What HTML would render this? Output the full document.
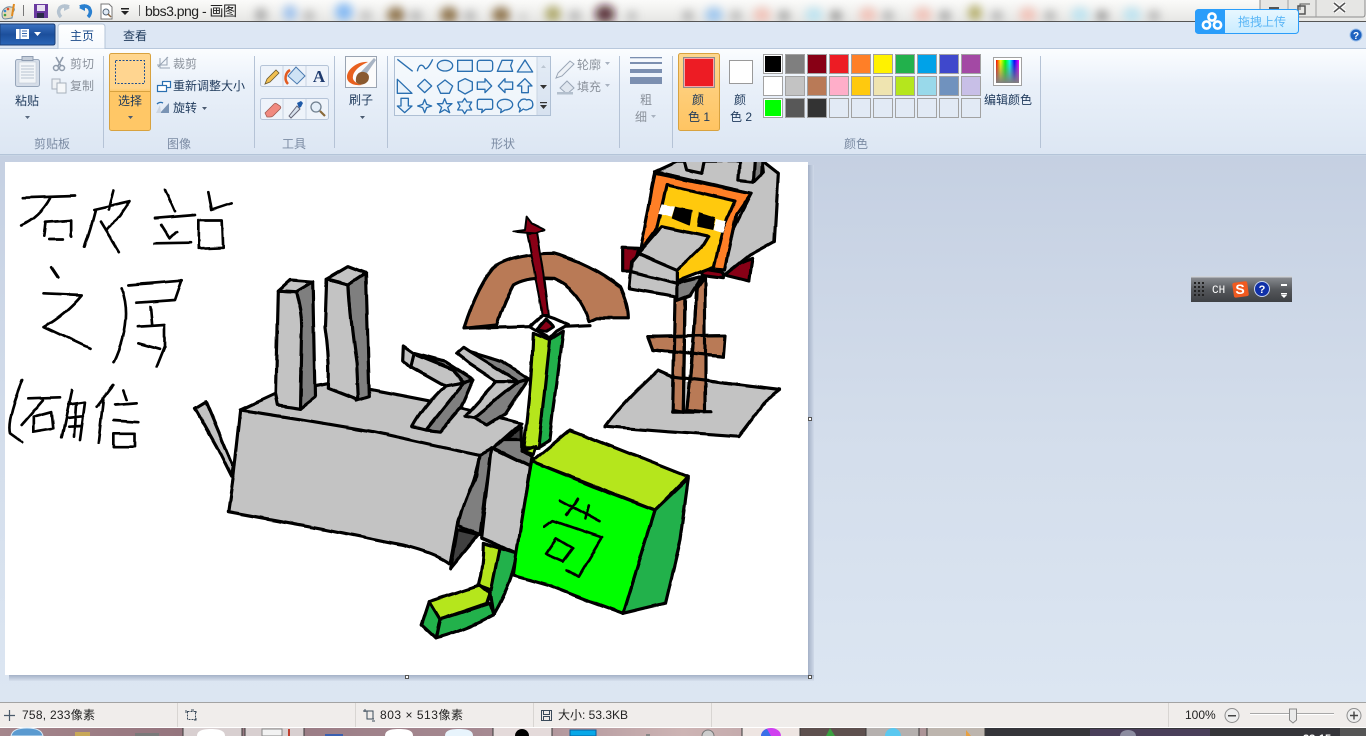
<!DOCTYPE html>
<html lang="zh"><head><meta charset="utf-8"><title>bbs3.png - 画图</title>
<style>
html,body{margin:0;padding:0;width:1366px;height:736px;overflow:hidden;background:#dce6f2}
svg{display:block;position:absolute;left:0;top:0}
text{font-family:"Liberation Sans","Noto Sans CJK SC",sans-serif;font-size:12px;fill:#1e395b}
.g{fill:#7b8ba3}.m{fill:#8b929c}
.d{stroke:#000;stroke-width:9.500;stroke-linejoin:round;stroke-linecap:round}
.w{fill:none;stroke:#000;stroke-width:8;stroke-linejoin:round;stroke-linecap:round}
.sh{fill:#e9f2fa;stroke:#2a6fb0;stroke-width:4;stroke-linejoin:round}
.c3{fill:#c3c3c3}.c7{fill:#7f7f7f}.lm{fill:#b5e61d}.gr{fill:#22b14c}.br{fill:#b97a57}.rd{fill:#880015}
.st{fill:#222;font-size:12px}
</style></head><body>
<svg width="1366" height="736" viewBox="0 0 1366 736" xmlns="http://www.w3.org/2000/svg">
<defs>
<filter id="b" x="-50%" y="-50%" width="200%" height="200%"><feGaussianBlur stdDeviation="4.500"/></filter>
<filter id="wob" x="0" y="0" width="1" height="1"><feTurbulence type="fractalNoise" baseFrequency=".035" numOctaves="2" seed="4" result="n"/><feDisplacementMap in="SourceGraphic" in2="n" scale="3.500" xChannelSelector="R" yChannelSelector="G"/></filter>
<linearGradient id="tt" x1="0" y1="0" x2="0" y2="1"><stop offset="0" stop-color="#fbfbfa"/><stop offset="1" stop-color="#e6e6e4"/></linearGradient>
<linearGradient id="rb" x1="0" y1="0" x2="0" y2="1"><stop offset="0" stop-color="#fbfdff"/><stop offset=".35" stop-color="#e9f0f9"/><stop offset="1" stop-color="#dce6f3"/></linearGradient>
<linearGradient id="ws" x1="0" y1="0" x2="0" y2="1"><stop offset="0" stop-color="#c5d0e2"/><stop offset=".5" stop-color="#d3ddeb"/><stop offset="1" stop-color="#dce6f2"/></linearGradient>
<linearGradient id="ab" x1="0" y1="0" x2="0" y2="1"><stop offset="0" stop-color="#3a72c0"/><stop offset=".5" stop-color="#1c4f9c"/><stop offset="1" stop-color="#2a66b8"/></linearGradient>
<linearGradient id="tb" x1="0" y1="0" x2="0" y2="1"><stop offset="0" stop-color="#fff"/><stop offset="1" stop-color="#f5f9fe"/></linearGradient>
<linearGradient id="se" x1="0" y1="0" x2="0" y2="1"><stop offset="0" stop-color="#ffd68f"/><stop offset=".45" stop-color="#ffd48a"/><stop offset=".5" stop-color="#ffc766"/><stop offset="1" stop-color="#ffc766"/></linearGradient>
<linearGradient id="sc" x1="0" y1="0" x2="0" y2="1"><stop offset="0" stop-color="#fdd78f"/><stop offset="1" stop-color="#ffc462"/></linearGradient>
<linearGradient id="gl" x1="0" y1="0" x2="0" y2="1"><stop offset="0" stop-color="#f5f9fd"/><stop offset="1" stop-color="#eef4fa"/></linearGradient>
<linearGradient id="sb" x1="0" y1="0" x2="0" y2="1"><stop offset="0" stop-color="#e4ecf6"/><stop offset="1" stop-color="#d7e2f0"/></linearGradient>
<linearGradient id="ime" x1="0" y1="0" x2="0" y2="1"><stop offset="0" stop-color="#8a8d92"/><stop offset=".5" stop-color="#55585c"/><stop offset="1" stop-color="#3e4044"/></linearGradient>
<linearGradient id="rbw" x1="0" y1="0" x2="1" y2="0"><stop offset="0" stop-color="#f00"/><stop offset=".2" stop-color="#ff0"/><stop offset=".4" stop-color="#0f0"/><stop offset=".6" stop-color="#0ff"/><stop offset=".8" stop-color="#00f"/><stop offset="1" stop-color="#f0f"/></linearGradient>
<linearGradient id="rbg" x1="0" y1="0" x2="0" y2="1"><stop offset="0" stop-color="#808080" stop-opacity="0"/><stop offset="1" stop-color="#808080"/></linearGradient>
<linearGradient id="bd" x1="0" y1="0" x2="0" y2="1"><stop offset="0" stop-color="#e8f7ff"/><stop offset="1" stop-color="#c9ecff"/></linearGradient>
<linearGradient id="tk" x1="0" y1="0" x2="1" y2="0"><stop offset="0" stop-color="#a5868c"/><stop offset=".13" stop-color="#95757e"/><stop offset=".36" stop-color="#a68a92"/><stop offset=".5" stop-color="#cdb4b4"/><stop offset=".58" stop-color="#bfa5a8"/><stop offset="1" stop-color="#6a5a5c"/></linearGradient>
<linearGradient id="shr" x1="0" y1="0" x2="1" y2="0"><stop offset="0" stop-color="#a4b1c7"/><stop offset="1" stop-color="#cfd9e8"/></linearGradient>
<linearGradient id="shb" x1="0" y1="0" x2="0" y2="1"><stop offset="0" stop-color="#a4b1c7"/><stop offset="1" stop-color="#d6e0ed"/></linearGradient>
<clipPath id="cv"><rect x="5" y="162" width="803" height="513"/></clipPath>
</defs>

<!-- title strip -->
<rect width="1366" height="22" fill="url(#tt)"/>
<g filter="url(#b)" opacity=".8" transform="translate(0 1)">
<ellipse cx="261" cy="14" rx="6" ry="7" fill="#9a9a9a"/><ellipse cx="290" cy="12" rx="7" ry="8" fill="#8cb8ee"/><ellipse cx="309" cy="15" rx="6" ry="6" fill="#b0b0b0"/>
<ellipse cx="344" cy="11" rx="9" ry="9" fill="#6eaef5"/><ellipse cx="366" cy="15" rx="6" ry="6" fill="#b8b8b8"/>
<ellipse cx="396" cy="14" rx="9" ry="8" fill="#7a5a2a"/><ellipse cx="416" cy="15" rx="6" ry="6" fill="#aaa"/>
<ellipse cx="449" cy="14" rx="9" ry="8" fill="#7a5a2a"/><ellipse cx="470" cy="15" rx="6" ry="6" fill="#aaa"/>
<ellipse cx="501" cy="14" rx="9" ry="8" fill="#7a5a2a"/><ellipse cx="523" cy="16" rx="4" ry="4" fill="#bbb"/>
<ellipse cx="553" cy="13" rx="8" ry="8" fill="#a09a50"/><ellipse cx="575" cy="15" rx="6" ry="6" fill="#aaa"/>
<ellipse cx="605" cy="13" rx="10" ry="9" fill="#3c1014"/><ellipse cx="632" cy="15" rx="5" ry="5" fill="#aaa"/>
<ellipse cx="688" cy="15" rx="6" ry="6" fill="#aaa"/>
<ellipse cx="714" cy="14" rx="9" ry="8" fill="#8fc0f0"/><ellipse cx="736" cy="15" rx="6" ry="6" fill="#b0b0b0"/>
<ellipse cx="762" cy="14" rx="9" ry="8" fill="#f2bcb0"/><ellipse cx="784" cy="15" rx="6" ry="6" fill="#999"/>
<ellipse cx="814" cy="14" rx="9" ry="8" fill="#b5e2f2"/><ellipse cx="836" cy="15" rx="6" ry="6" fill="#888"/>
<ellipse cx="868" cy="14" rx="9" ry="8" fill="#f2bcb0"/><ellipse cx="888" cy="15" rx="6" ry="6" fill="#aaa"/>
<ellipse cx="923" cy="14" rx="9" ry="8" fill="#f2bcb0"/><ellipse cx="945" cy="15" rx="6" ry="6" fill="#999"/>
<ellipse cx="975" cy="12" rx="7" ry="8" fill="#a8a050"/><ellipse cx="997" cy="15" rx="6" ry="6" fill="#aaa"/>
<ellipse cx="1028" cy="14" rx="9" ry="8" fill="#f2bcb0"/><ellipse cx="1050" cy="15" rx="6" ry="6" fill="#aaa"/>
<ellipse cx="1080" cy="14" rx="9" ry="8" fill="#b5e2f2"/><ellipse cx="1102" cy="15" rx="6" ry="6" fill="#888"/>
<ellipse cx="1132" cy="14" rx="9" ry="8" fill="#b5e2f2"/><ellipse cx="1154" cy="15" rx="6" ry="6" fill="#aaa"/>
</g>
<!-- QAT -->
<g>
<path d="M2 14c0-5 5-8 9-7 4 0 4 3 2 5l-1 6-7 1c-2 0-3-2-3-5z" fill="#e8d9b8" stroke="#6a8aa0"/>
<circle cx="5" cy="11" r="1.300" fill="#3a8ad0"/><circle cx="8" cy="9" r="1.300" fill="#e05030"/><circle cx="5" cy="15" r="1.300" fill="#40a040"/>
<path d="M14 4l-2 12" stroke="#e08a20" stroke-width="2"/>
<rect x="23" y="5" width="1" height="11" fill="#777"/>
<rect x="34" y="4" width="14" height="14" fill="#6a3aa0"/><rect x="37" y="5" width="8" height="6" fill="#e8e0f2"/><rect x="37" y="13" width="7" height="5" fill="#2a2a48"/>
<path d="M69 7c-4-2-9-1-10 3-1 2 0 5 2 7" fill="none" stroke="#b5c3d0" stroke-width="3.500"/><path d="M64 4l6 4-6 3z" fill="#b5c3d0"/>
<path d="M80 7c4-2 9-1 10 3 1 2 0 5-2 7" fill="none" stroke="#2a80d0" stroke-width="3.500"/><path d="M85 4l-6 4 6 3z" fill="#2a80d0"/>
<path d="M101 4h8l3 3v12h-11z" fill="#fff" stroke="#777"/><circle cx="106" cy="12" r="3" fill="#dfeaf6" stroke="#567"/><path d="M108 14l3 3" stroke="#864" stroke-width="1.500"/>
<rect x="121" y="8" width="8" height="1.500" fill="#222"/><path d="M121 11h8l-4 4z" fill="#222"/>
<rect x="139" y="5" width="1" height="11" fill="#777"/>
<text x="145" y="16" textLength="92" style="font-size:14px;fill:#222">bbs3.png - 画图</text>
</g>
<!-- window buttons -->
<path d="M1260 0v17h103c1 0 2-1 2-3V0" fill="#e6e6e4" stroke="#8c8c8c"/>
<path d="M1288 0v17M1316 0v17" stroke="#a0a0a0"/>
<rect x="1269" y="7" width="10" height="3" fill="#555"/>
<rect x="1298" y="6" width="7" height="8" fill="none" stroke="#555" stroke-width="1.500"/><path d="M1296 9V3h10" fill="none" stroke="#555" transform="translate(4 1)"/>
<path d="M1334 3l11 9M1345 3l-11 9" stroke="#fff" stroke-width="4"/><path d="M1334 3l11 9M1345 3l-11 9" stroke="#555" stroke-width="1.600"/>

<!-- tab band -->
<rect y="21" width="1366" height="1.500" fill="#555"/>
<rect y="22" width="1366" height="27" fill="#dde7f4"/>
<rect y="48" width="1366" height="1" fill="#b8c8dc"/>
<path d="M0 24h53c1.500 0 2 .5 2 2v17c0 1.500-.5 2-2 2H0z" fill="url(#ab)" stroke="#1a3f78"/>
<rect x="16" y="29" width="13" height="10" fill="#fff"/><path d="M20 29v10M22 31h5M22 33.500h5M22 36h5" stroke="#3a6ab0"/><path d="M34 32h7l-3.500 4z" fill="#fff"/>
<path d="M58 49V27c0-2 1-3 3-3h41c2 0 3 1 3 3v22z" fill="url(#tb)" stroke="#b5c5d8"/>
<text x="82" y="40" text-anchor="middle" style="fill:#1a4a8a">主页</text>
<text x="135" y="40" text-anchor="middle">查看</text>
<circle cx="1356" cy="35" r="6" fill="#1e62c0" stroke="#9cc0ea"/><text x="1356" y="39" text-anchor="middle" style="font-size:10px;fill:#fff;font-weight:bold">?</text>

<!-- ribbon -->
<rect y="49" width="1366" height="106" fill="url(#rb)"/>
<rect y="154" width="1366" height="1.500" fill="#b4c4d8"/>
<g fill="#b5c3d6">
<rect x="103" y="56" width="1" height="92"/><rect x="254" y="56" width="1" height="92"/><rect x="334" y="56" width="1" height="92"/><rect x="387" y="56" width="1" height="92"/><rect x="619" y="56" width="1" height="92"/><rect x="672" y="56" width="1" height="92"/><rect x="1040" y="56" width="1" height="92"/>
</g>
<text x="52" y="148" text-anchor="middle" class="g">剪贴板</text><text x="179" y="148" text-anchor="middle" class="g">图像</text><text x="294" y="148" text-anchor="middle" class="g">工具</text><text x="503" y="148" text-anchor="middle" class="g">形状</text><text x="856" y="148" text-anchor="middle" class="g">颜色</text>

<!-- clipboard -->
<rect x="15.500" y="59.500" width="24" height="27" rx="2" fill="#d5dde8" stroke="#97a6ba"/><rect x="19" y="62" width="17" height="21" fill="#f2f5f8" stroke="#c0c8d4" stroke-width=".6"/><path d="M21 66h13M21 69h13M21 72h13M21 75h13M21 78h13" stroke="#b8c2d0"/><rect x="22" y="56.500" width="11" height="4" fill="#c4cdd9" stroke="#8f9db1"/>
<text x="27" y="105" text-anchor="middle">粘贴</text><path d="M25 116h5l-2.500 3z" fill="#5a6a80"/>
<path d="M56 57l5 9M63 57l-5 9" stroke="#8f9bab" stroke-width="1.600"/><circle cx="56" cy="68" r="2.500" fill="none" stroke="#8f9bab" stroke-width="1.500"/><circle cx="62" cy="68" r="2.500" fill="none" stroke="#8f9bab" stroke-width="1.500"/>
<text x="70" y="68" class="m">剪切</text>
<rect x="52" y="79" width="8" height="10" fill="#eef1f4" stroke="#a7b0bc"/><rect x="57" y="83" width="9" height="10" fill="#f5f7f9" stroke="#a7b0bc"/>
<text x="70" y="90" class="m">复制</text>

<!-- select -->
<rect x="109.500" y="53.500" width="41" height="77" rx="2" fill="url(#se)" stroke="#d8a23f"/><rect x="110" y="91" width="40" height="1" fill="#d8a23f"/>
<rect x="115.500" y="60.500" width="29" height="23" fill="#ffd590" stroke="#1d4f90" stroke-dasharray="2 1.500"/>
<text x="130" y="105" text-anchor="middle">选择</text><path d="M128 116h5l-2.500 3z" fill="#4a5a70"/>
<path d="M160 58v10h10M157 65h10V57M158 67l10-10" fill="none" stroke="#98a4b4"/><text x="173" y="68" class="m">裁剪</text>
<rect x="162.500" y="81.500" width="8" height="6" fill="#fff" stroke="#2a6fb0" stroke-width="1.200"/><rect x="157.500" y="85.500" width="9" height="6" fill="#fff" stroke="#2a6fb0" stroke-width="1.200"/>
<text x="173" y="90">重新调整大小</text>
<path d="M160 113l9-10v10z" fill="#7a94b4"/><path d="M156 113l4-8 1 8z" fill="#cdd6e2"/><path d="M157 104c2-2 4-2 6-1" fill="none" stroke="#2a6fb0" stroke-width="1.300"/>
<text x="173" y="112">旋转</text><path d="M202 107h5l-2.500 3z" fill="#4a5a70"/>

<!-- tools -->
<rect x="260.500" y="65.500" width="68" height="21" rx="2" fill="#eef3fa" stroke="#b5c4d8"/><rect x="260.500" y="98.500" width="68" height="21" rx="2" fill="#eef3fa" stroke="#b5c4d8"/>
<path d="M283 66v20M306 66v20M283 99v20M306 99v20" stroke="#c8d3e2"/>
<path d="M265 84l2-5 9-9 3 3-9 9z" fill="#f2c050" stroke="#6a5a30" stroke-width=".8"/>
<path d="M296 67l9 9-8 8-9-8z" fill="#cfe3f5" stroke="#4a7ab0"/><path d="M290 70c-5 3-6 10-2 14" stroke="#e25a20" stroke-width="2.500" fill="none"/>
<text x="319" y="82" text-anchor="middle" style="font-family:'Liberation Serif',serif;font-size:17px;font-weight:bold;fill:#1e3a6e">A</text>
<path d="M265 113l9-9c1-1 2-1 3 0l3 2c1 1 1 2 0 3l-7 7c-1 1-2 1-3 1h-3z" fill="#f08a80" stroke="#a05a50" stroke-width=".8"/>
<path d="M289 116l8-10 3 3-9 9z" fill="#d8e2ee" stroke="#667"/><path d="M297 103l4-2 2 2-2 4-2 1z" fill="#1e5aa8"/>
<circle cx="316" cy="107" r="5" fill="#e4eef8" stroke="#708090" stroke-width="1.300"/><path d="M320 111l5 5" stroke="#8a6a3a" stroke-width="2.200"/>

<!-- brush -->
<rect x="345.500" y="56.500" width="31" height="31" fill="#fbfbfb" stroke="#9aa4b2"/>
<path d="M368 62c-10-1-21 7-21 15 0 6 7 9 15 8-7-2-10-5-9-9 1-6 8-11 15-14z" fill="#e8601e"/>
<path d="M360 73l14-15 2 2-11 16z" fill="#a8b4c4"/>
<path d="M356 82c-1-7 3-11 8-10 5 1 6 5 4 9-3 4-9 5-12 1z" fill="#8a5a30"/>
<text x="361" y="104" text-anchor="middle">刷子</text><path d="M360 116h5l-2.500 3z" fill="#4a5a70"/>

<!-- shapes gallery -->
<rect x="394.500" y="56.500" width="156" height="59" fill="url(#gl)" stroke="#aebfd4"/>
<rect x="537" y="57" width="13" height="58" fill="url(#sb)"/><path d="M537 57v58" stroke="#c8d4e2"/>
<path d="M541 68h5l-2.500-3z" fill="#bcc6d2"/><path d="M540 85h7l-3.500 4z" fill="#333"/><path d="M540 105h7l-3.500 4z" fill="#333"/><rect x="540" y="102" width="7" height="1.200" fill="#333"/>
<g transform="translate(380 0) scale(.3333)" class="sh">
<path d="M52 178L98 214" fill="none"/><path d="M112 214C118 186 130 196 134 204S150 196 158 178" fill="none"/>
<ellipse cx="195" cy="197" rx="23" ry="16"/><rect x="233" y="181" width="44" height="33"/><rect x="292" y="181" width="46" height="33" rx="8"/>
<path d="M352 214L366 181H398L392 197L398 214Z"/><path d="M435 180L458 216H412Z"/>
<path d="M52 238L96 280H52Z"/><path d="M134 238L155 258L134 278L113 258Z"/><path d="M195 240L218 258L208 280H182L172 258Z"/><path d="M255 236L277 246V270L255 282L235 270V246Z"/>
<path d="M292 246H315V236L335 258L315 278V268H292Z"/><path d="M398 246H375V236L355 258L375 278V268H398Z"/><path d="M435 236L456 258H445V278H425V258H412Z"/>
<path d="M63 295H85V318H96L74 338L52 318H63Z"/><path d="M134 298L140 313L155 318L140 323L134 338L128 323L113 318L128 313Z"/>
<path d="M194 296L200 311H216L203 322L209 338L194 329L179 338L185 322L172 311H188Z"/>
<path d="M254 295L261 306H275L268 318L275 330H261L254 341L247 330H233L240 318L233 306H247Z"/>
<path d="M298 298H332Q338 298 338 304V322Q338 328 332 328H316L305 338L307 328H298Q292 328 292 322V304Q292 298 298 298Z"/>
<path d="M375 298C390 298 398 306 398 314S388 330 375 330L362 338L364 328C356 325 352 320 352 314C352 306 360 298 375 298Z"/>
<path d="M420 304C424 296 436 296 440 300C448 296 458 302 458 310C460 318 456 326 448 326C442 332 434 330 430 327L418 336L421 325C414 322 412 310 420 304Z"/>
</g>
<path d="M558 73l12-12 4 3-12 12-6 2z" fill="#eef2f7" stroke="#9aa6b6"/><text x="577" y="69" class="m">轮廓</text><path d="M605 62h5l-2.500 3z" fill="#a8b2c0"/>
<path d="M560 88l7-7 7 7-7 6z" fill="#dfe6ef" stroke="#9aa6b6"/><rect x="557" y="92" width="16" height="2.500" fill="#b3bfcd"/><text x="577" y="91" class="m">填充</text><path d="M605 84h5l-2.500 3z" fill="#a8b2c0"/>
<!-- size -->
<g fill="#7b8fb0"><rect x="630" y="57" width="32" height="1.300"/><rect x="630" y="62" width="32" height="2"/><rect x="630" y="69" width="32" height="4"/><rect x="630" y="77" width="32" height="7"/></g>
<text x="646" y="104" text-anchor="middle" class="m">粗</text><text x="641" y="121" text-anchor="middle" class="m">细</text><path d="M651 115h5l-2.500 3z" fill="#a8b2c0"/>

<!-- colour 1/2 -->
<rect x="678.500" y="53.500" width="41" height="77" rx="2" fill="url(#sc)" stroke="#d8a23f"/>
<rect x="683.500" y="57.500" width="31" height="30" fill="#ed1c24" stroke="#8c8c8c"/><rect x="684.500" y="58.500" width="29" height="28" fill="none" stroke="#fff" stroke-opacity=".6"/>
<text x="698" y="104" text-anchor="middle">颜</text><text x="699" y="121" text-anchor="middle">色 1</text>
<rect x="729.500" y="60.500" width="23" height="23" fill="#fff" stroke="#9a9a9a"/>
<text x="740" y="104" text-anchor="middle">颜</text><text x="741" y="121" text-anchor="middle">色 2</text>

<!-- palette -->
<g stroke="#a2a2a2" stroke-width="1">
<rect x="763.500" y="54.500" width="19" height="19" fill="#000"/><rect x="785.500" y="54.500" width="19" height="19" fill="#7f7f7f"/><rect x="807.500" y="54.500" width="19" height="19" fill="#880015"/><rect x="829.500" y="54.500" width="19" height="19" fill="#ed1c24"/><rect x="851.500" y="54.500" width="19" height="19" fill="#ff7f27"/><rect x="873.500" y="54.500" width="19" height="19" fill="#fff200"/><rect x="895.500" y="54.500" width="19" height="19" fill="#22b14c"/><rect x="917.500" y="54.500" width="19" height="19" fill="#00a2e8"/><rect x="939.500" y="54.500" width="19" height="19" fill="#3f48cc"/><rect x="961.500" y="54.500" width="19" height="19" fill="#a349a4"/>
<rect x="763.500" y="76.500" width="19" height="19" fill="#fff"/><rect x="785.500" y="76.500" width="19" height="19" fill="#c3c3c3"/><rect x="807.500" y="76.500" width="19" height="19" fill="#b97a57"/><rect x="829.500" y="76.500" width="19" height="19" fill="#ffaec9"/><rect x="851.500" y="76.500" width="19" height="19" fill="#ffc90e"/><rect x="873.500" y="76.500" width="19" height="19" fill="#efe4b0"/><rect x="895.500" y="76.500" width="19" height="19" fill="#b5e61d"/><rect x="917.500" y="76.500" width="19" height="19" fill="#99d9ea"/><rect x="939.500" y="76.500" width="19" height="19" fill="#7092be"/><rect x="961.500" y="76.500" width="19" height="19" fill="#c8bfe7"/>
<rect x="763.500" y="98.500" width="19" height="19" fill="#0f0"/><rect x="785.500" y="98.500" width="19" height="19" fill="#585858"/><rect x="807.500" y="98.500" width="19" height="19" fill="#333"/>
<g fill="#e2eaf5"><rect x="829.500" y="98.500" width="19" height="19"/><rect x="851.500" y="98.500" width="19" height="19"/><rect x="873.500" y="98.500" width="19" height="19"/><rect x="895.500" y="98.500" width="19" height="19"/><rect x="917.500" y="98.500" width="19" height="19"/><rect x="939.500" y="98.500" width="19" height="19"/><rect x="961.500" y="98.500" width="19" height="19"/></g>
</g>
<g fill="none" stroke="#fff"><path d="M764.500 55.500h17v17h-17zM764.500 77.500h17v17h-17zM764.500 99.500h17v17h-17z"/></g>
<rect x="993.500" y="57.500" width="28" height="28" fill="#fff" stroke="#a2a2a2"/><rect x="996" y="60" width="23" height="23" fill="url(#rbw)"/><rect x="996" y="60" width="23" height="23" fill="url(#rbg)"/>
<text x="1008" y="104" text-anchor="middle">编辑颜色</text>

<!-- baidu widget -->
<rect x="1195.500" y="9.500" width="103" height="24" rx="3" fill="url(#bd)" stroke="#2a9dfa"/>
<path d="M1198 9.500h27v24h-27a3 3 0 0 1-3-3v-18a3 3 0 0 1 3-3z" fill="#2a9dfa"/>
<g fill="none" stroke="#fff" stroke-width="2.600"><circle cx="1212" cy="17" r="3.600"/><circle cx="1206.500" cy="25" r="3.600"/><circle cx="1217.500" cy="25" r="3.600"/></g>
<text x="1262" y="26" text-anchor="middle" style="fill:#5ab6f6">拖拽上传</text>

<!-- workspace -->
<rect y="156" width="1366" height="546" fill="url(#ws)"/>
<rect x="808" y="165" width="6" height="516" fill="url(#shr)"/><rect x="9" y="675" width="805" height="6" fill="url(#shb)"/>
<rect x="5" y="162" width="803" height="513" fill="#fff"/>

<!-- drawing -->
<g clip-path="url(#cv)"><g filter="url(#wob)">
<rect x="5" y="162" width="803" height="513" fill="#fff"/>
<!-- handwriting -->
<g transform="translate(0 160) scale(.33333)">
<g class="w">
<path d="M70 113L225 108M150 115Q120 170 65 195M130 230L135 185L215 180L215 230M145 240L190 240"/>
<path d="M340 90L325 150M280 150L390 125L360 170L315 210M285 150Q270 210 252 260M300 185L355 275"/>
<path d="M495 88L525 155M465 175L585 165M485 195L510 235L530 215M465 250L570 248"/>
<path d="M625 95L635 150L695 130M600 180L665 180L668 262L595 265L595 180"/>
<path d="M155 322L175 352M132 400L245 405Q200 460 132 500L270 565"/>
<path d="M385 375L545 362L525 420L410 428M365 385Q400 480 342 605M450 440L455 495M415 500L495 495L495 560L470 622M415 550L480 568"/>
<path d="M68 660Q20 780 30 820L65 845"/>
<path d="M85 715L180 712M130 720L65 795M100 770L155 755L160 805L100 815Z"/>
<path d="M215 690L205 740L185 835M205 735L255 728L240 840M205 775L250 770M205 800L245 798M228 735L222 830"/>
<path d="M340 675L290 740M310 720L295 850M370 690L380 720M345 735L410 730M340 780L415 785M340 820H405V860H340Z"/>
</g>
<path class="d c3" d="M585 745L618 725L700 920L695 950L650 860Z"/>
</g>
<!-- body -->
<g transform="translate(220 380) scale(.33333)">
<path class="d c3" d="M62 90L170 40L330 10L460 30L640 65L730 85L905 130L820 205L780 225L240 120Z"/>
<path class="d c3" d="M62 90L240 118L460 155L640 195L780 225Q770 300 715 420L690 550Q650 520 550 495L300 445L25 395L40 290Z"/>
<path class="d c7" d="M780 225L815 205L780 465L715 440Q720 380 770 290Z"/>
<path class="d" style="fill:#3f3f3f" d="M712 450L775 465L692 565Z"/>
<path class="d" style="fill:#3f3f3f" d="M860 180L905 140V185Z"/>
</g>
<g transform="translate(0 160) scale(.33333)">
<path class="d c7" d="M888 395L938 365L945 710L900 745Z"/>
<path class="d c3" d="M835 392L888 395Q905 450 905 500L900 745L835 735L828 700Z"/>
<path class="d c3" d="M835 392L870 360L938 365L888 395Z"/>
<path class="d c7" d="M1045 375L1098 340L1108 710L1070 722Z"/>
<path class="d c3" d="M980 358L1045 375Q1050 470 1070 610L1075 720L985 685Q990 600 975 500Z"/>
<path class="d c3" d="M980 358L1045 320L1098 340L1045 375Z"/>
</g>
<!-- arrows + leg -->
<g transform="translate(390 210) scale(.33333)">
<path class="d c7" d="M72 430L165 455L250 510L222 518L190 480Z"/>
<path class="d c3" d="M72 432L190 480L222 518L165 528L62 470Z"/>
<path class="d c7" d="M222 518L250 510L215 590L150 665L108 660Z"/>
<path class="d c3" d="M165 528L222 518L108 660L68 650Q100 590 165 528Z"/>
<path class="d c3" d="M40 408L72 430L62 472L38 450Z"/>
<path class="d c7" d="M240 425L340 455L415 505L385 515Z"/>
<path class="d c3" d="M200 430L220 412L240 425L385 515L320 515L240 462Z"/>
<path class="d c7" d="M385 515L415 505L345 610L290 645L250 625Z"/>
<path class="d c3" d="M320 515L385 515L250 625L225 620Z"/>
<path class="d gr" d="M480 390L520 365L490 600L480 690L440 715Z"/>
<path class="d lm" d="M430 370L480 390L445 715L400 715Q425 520 430 370Z"/>
<path class="d br" d="M222 355Q265 220 320 165Q380 130 490 130Q600 160 690 230Q715 280 715 325L620 325L597 335Q570 240 490 205Q410 200 370 225Q340 280 320 345Z"/>
<path class="d" fill="none" d="M222 355L420 350M530 350L600 347"/>
<path class="d" fill="#fff" d="M420 350L460 315L490 325L535 345L500 365L480 385Z"/>
<path class="d rd" d="M440 360L468 328L490 352L470 365Z"/>
<path class="d rd" style="stroke-width:6" d="M412 72L440 70L460 190L475 315L458 315L432 170Z"/>
<path class="d rd" style="stroke-width:6" d="M370 65L405 60L410 20L425 40L465 60L435 70L405 68Z"/>
</g>
<!-- head/stand -->
<g transform="translate(590 155) scale(.33333)">
<path class="d c3" d="M205 645L250 665L450 690L570 705L525 740L445 845L230 830L45 815Q100 740 205 645Z"/>
<path class="d br" d="M175 545L405 542L400 605L190 585Z"/>
<path d="M285 425H320L300 680H285Z" fill="#fff"/>
<path class="d br" d="M255 430L285 425L280 770L248 765Z"/>
<path class="d br" d="M320 400L345 365V770L290 765Q310 600 320 400Z"/>
<path class="d" fill="none" d="M175 545L405 542M190 585L400 605M248 770L365 770M210 648L250 665L450 690"/>
<path d="M285 682L303 684L290 762H283Z" fill="#c3c3c3"/>
<path class="d" fill="none" d="M285 425L280 770M320 400Q310 600 290 765"/>
<path class="d rd" d="M98 278L145 280L125 350L98 350Z"/>
<path class="d rd" d="M405 345L487 310L478 378L405 360Z"/>
<path class="d rd" d="M335 340L400 350V368L335 360Z"/>
<path class="d c3" d="M195 50L260 20H520L565 55L553 260L480 300L405 360L375 335L485 115Z"/>
<path class="d c3" d="M280 10H345L335 55L290 45Z"/>
<path class="d c3" d="M450 10H515L520 50L490 80L445 75Z"/>
<path class="d c7" d="M495 10H518L515 55L490 80Z"/>
<path class="d" style="fill:#ff7f27" d="M195 55L485 115L440 180L405 345L340 340L265 375L150 290Z"/>
<path class="d" style="fill:#ffc90e" d="M230 90L435 138L400 220L372 335L262 378V345L145 295L200 220Z"/>
<path fill="#fff" d="M215 148L255 155L245 185L205 175ZM380 190L410 198L400 235L370 225Z"/>
<path fill="#000" d="M255 155L305 165L298 212L245 190ZM325 170L378 185L370 225L320 215Z"/>
<path class="d c3" d="M215 215L355 245L340 270L262 345L145 295Z"/>
<path class="d c7" d="M262 385L335 365L300 420L260 435Z"/>
<path class="d c3" d="M125 320L145 295L262 345L262 425L118 400Z"/>
<path class="d" fill="none" d="M125 350L262 385"/>
</g>
<!-- head -->
<g transform="translate(220 380) scale(.33333)">
<path class="d gr" d="M840 505L890 520Q880 600 820 705L810 640Z"/>
<path class="d lm" d="M790 490L840 505L815 630L775 615Q790 560 790 490Z"/>
<path class="d lm" d="M628 665L780 615L810 640L800 670L660 718Z"/>
<path class="d gr" d="M628 665L660 718L648 775L605 735Z"/>
<path class="d gr" d="M660 718L810 670L820 705Q740 750 648 775Z"/>
<path class="d c3" d="M815 205L930 260L890 520L785 475Z"/>
<path class="d c7" d="M820 205L850 180L905 180V215L935 232L930 260Z"/>
<path class="d lm" d="M905 215L945 200L938 225Z"/>
<path class="d lm" d="M935 245L1050 150L1405 290L1305 390Z"/>
<path class="d gr" d="M1305 390L1405 295L1380 480L1335 670L1210 700Z"/>
<path class="d" style="fill:#0f0" d="M935 245L1120 320L1305 390L1210 700L1100 660L985 615L880 585Q905 400 935 245Z"/>
<path class="w" d="M1020 360L1140 425M1072 355L1040 405M1105 375L1095 415M975 440L1000 422L1145 472L1075 590L1040 570M1010 475L1060 505L1030 545L978 522Z"/>
</g>
</g></g>
<!-- handles -->
<g fill="#fff" stroke="#555"><rect x="808.500" y="417.500" width="3" height="3"/><rect x="405.500" y="675.500" width="3" height="3"/><rect x="808.500" y="675.500" width="3" height="3"/></g>

<!-- IME bar -->
<rect x="1191" y="277" width="101" height="25" fill="url(#ime)"/><rect x="1191" y="276" width="101" height="1.500" fill="#d0d4da"/>
<g fill="#222"><rect x="1194" y="282" width="2" height="2"/><rect x="1198" y="282" width="2" height="2"/><rect x="1202" y="282" width="2" height="2"/><rect x="1194" y="286" width="2" height="2"/><rect x="1198" y="286" width="2" height="2"/><rect x="1202" y="286" width="2" height="2"/><rect x="1194" y="290" width="2" height="2"/><rect x="1198" y="290" width="2" height="2"/><rect x="1202" y="290" width="2" height="2"/><rect x="1194" y="294" width="2" height="2"/><rect x="1198" y="294" width="2" height="2"/><rect x="1202" y="294" width="2" height="2"/></g>
<text x="1212" y="293" style="font-family:'Liberation Mono',monospace;font-size:11px;fill:#fff">CH</text>
<rect x="1233" y="282" width="15" height="15" rx="2" fill="#f05a20" transform="rotate(-8 1240 289)"/><text x="1240" y="294" text-anchor="middle" style="font-size:14px;font-weight:bold;fill:#fff">S</text>
<circle cx="1262" cy="289" r="7.500" fill="#1030a8" stroke="#c8d4ee"/><text x="1262" y="293" text-anchor="middle" style="font-size:11px;font-weight:bold;fill:#fff">?</text>
<rect x="1281" y="284" width="6" height="2" fill="#fff"/><rect x="1281" y="293" width="6" height="1.500" fill="#fff"/><path d="M1281 295h6l-3 3z" fill="#fff"/>

<!-- status bar -->
<rect y="702" width="1366" height="26" fill="#f0edeb"/><rect y="702" width="1366" height="1" fill="#a3a3a3"/><rect y="727" width="1366" height="1" fill="#fff"/>
<g fill="#d8d5d2"><rect x="177" y="703" width="1" height="24"/><rect x="355" y="703" width="1" height="24"/><rect x="533" y="703" width="1" height="24"/><rect x="711" y="703" width="1" height="24"/><rect x="1168" y="703" width="1" height="24"/></g>
<path d="M4 715.500h11M9.500 710v11" stroke="#4a5a6a" stroke-width="1.200"/>
<text x="22" y="719" class="st" textLength="73">758, 233像素</text>
<path d="M186 710v3M191 710h3M196 711v2" stroke="#3a4a5a"/><rect x="187.500" y="711.500" width="8" height="8" fill="none" stroke="#3a4a5a" stroke-dasharray="2 1"/><path d="M194 720h2v-2" stroke="#3a4a5a" fill="none"/>
<path d="M365 709v3M363 711h10v8" fill="none" stroke="#3a4a5a"/><path d="M367 711v8h7M372 721h3" fill="none" stroke="#3a4a5a"/>
<text x="380" y="719" class="st" textLength="83">803 × 513像素</text>
<rect x="541.500" y="710.500" width="10" height="10" fill="none" stroke="#3a4a5a"/><rect x="543.500" y="710.500" width="6" height="4" fill="none" stroke="#3a4a5a"/><rect x="543.500" y="716.500" width="6" height="4" fill="none" stroke="#3a4a5a"/>
<text x="558" y="719" class="st">大小: 53.3KB</text>
<text x="1185" y="719" class="st">100%</text>
<circle cx="1232" cy="715.500" r="7" fill="#eee" stroke="#8e8e8e"/><rect x="1228" y="715" width="8" height="1.500" fill="#444"/>
<rect x="1250" y="713" width="84" height="1" fill="#a8a8a8"/><rect x="1250" y="714" width="84" height="1" fill="#fff"/>
<path d="M1289.500 709h7v11l-3.500 3-3.500-3z" fill="#eaeaea" stroke="#8a8a8a"/>
<circle cx="1354" cy="715.500" r="7" fill="#eee" stroke="#8e8e8e"/><path d="M1350 715.500h8M1354 711.500v8" stroke="#444" stroke-width="1.400"/>

<!-- taskbar -->
<rect y="728" width="1366" height="8" fill="url(#tk)"/>
<rect x="800" y="728" width="66" height="8" fill="#5e504e"/>
<rect x="985" y="728" width="355" height="8" fill="#35353a"/>
<rect x="1090" y="729" width="120" height="7" fill="#4a3f5a"/>
<rect x="1340" y="728" width="26" height="8" fill="#555"/>
<rect x="183" y="728" width="59" height="8" fill="#d8cfd0"/><rect x="245" y="728" width="59" height="8" fill="#d8cfd0"/><rect x="493" y="728" width="59" height="8" fill="#e4dada"/><rect x="742" y="728" width="58" height="8" fill="#eee5e2"/><rect x="866" y="728" width="53" height="8" fill="#b5b0ae"/><rect x="927" y="728" width="58" height="8" fill="#bdb5ae"/>
<path d="M183 728v8M242 728v8M245 728v8M304 728v8M493 728v8M552 728v8M742 728v8M800 728v8M866 728v8M919 728v8M927 728v8M985 728v8" stroke="#3a3a3a"/>
<path d="M11 736c1-6 8-8 16-8s15 2 16 8z" fill="#5a9ad0" stroke="#d8e8f4"/>
<rect x="75" y="732" width="15" height="4" fill="#c8a858"/><rect x="135" y="733" width="24" height="3" fill="#7a7a7a"/>
<path d="M197 736c0-5 5-7 14-7s14 2 14 7z" fill="#fff"/><rect x="262" y="729" width="20" height="7" fill="#f2f2f2" stroke="#888"/><rect x="288" y="729" width="2" height="7" fill="#c04030"/>
<rect x="325" y="734" width="18" height="2" fill="#3a60b0"/><path d="M385 736c0-5 4-7 14-7s14 2 14 7z" fill="#fff"/><path d="M445 736c0-5 4-7 14-7s14 2 14 7z" fill="#e8f4fc"/>
<circle cx="522" cy="736" r="7" fill="#000"/><rect x="570" y="730" width="26" height="6" fill="#08a8e8" stroke="#0a60a0"/><rect x="646" y="734" width="4" height="2" fill="#888"/><circle cx="708" cy="736" r="6" fill="#ccc" stroke="#777"/>
<path d="M761 736c0-5 5-8 10-8s10 3 10 8z" fill="#d040f0"/><path d="M761 736c0-4 4-7 6-7l4 7z" fill="#3a70e8"/>
<path d="M826 736l4-8 5 8z" fill="#3aa040"/><circle cx="893" cy="736" r="8" fill="#5ac8f0"/><path d="M966 730l5 6h-5z" fill="#e8a040"/>
<path d="M1120 736c0-4 4-6 8-6s8 2 8 6z" fill="#8c8ca0"/>
<text x="1303" y="742" style="font-size:11px;fill:#fff;font-weight:bold">23:15</text>
</svg>
</body></html>
